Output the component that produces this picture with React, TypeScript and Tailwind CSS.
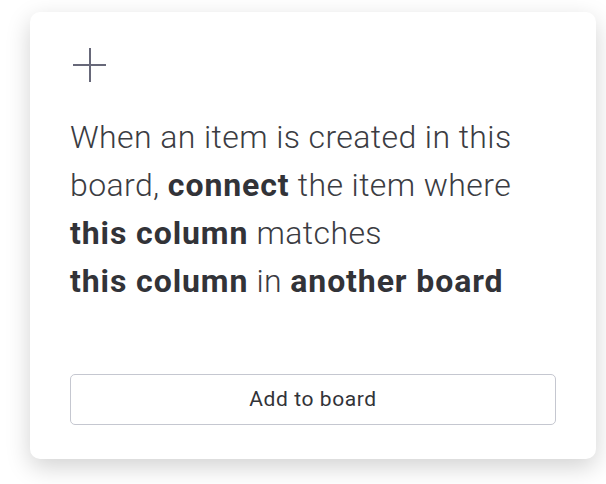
export default function App() {
  return (
    <div className="w-[606px] h-[484px] bg-white" style={{ fontFamily: "Roboto, 'Liberation Sans', sans-serif" }}>
      <div className="pt-[12px] pl-[30px]">
        <div className="w-[566px] h-[447px] bg-white rounded-[10px] shadow-[0_8px_24px_rgba(0,0,0,0.18)] px-[40px] pt-[36px] flex flex-col">
          <div className="ml-[3px] h-[34px]">
            <svg width="34" height="34" viewBox="0 0 34 34">
              <line x1="0" y1="17" x2="33" y2="17" stroke="#676879" strokeWidth="2" />
              <line x1="17" y1="0" x2="17" y2="34" stroke="#676879" strokeWidth="2" />
            </svg>
          </div>
          <p className="mt-[31px] text-[32px] leading-[48px] font-light text-[#3b3c42] tracking-[0.4px] whitespace-nowrap">
            When an item is created in this
            <br />
            board, <span className="font-bold text-[#323338] tracking-[0.9px]">connect</span> the item where
            <br />
            <span className="font-bold text-[#323338] tracking-[0.9px]">this column</span> matches
            <br />
            <span className="font-bold text-[#323338] tracking-[0.9px]">this column</span> in{" "}
            <span className="font-bold text-[#323338] tracking-[0.9px]">another board</span>
          </p>
          <div className="flex-1" />
          <button className="mb-[34px] h-[51px] w-full rounded-[5px] border border-[#c5c7d0] text-[21px] tracking-[0.6px] text-[#323338] bg-white">
            Add to board
          </button>
        </div>
      </div>
    </div>
  );
}
